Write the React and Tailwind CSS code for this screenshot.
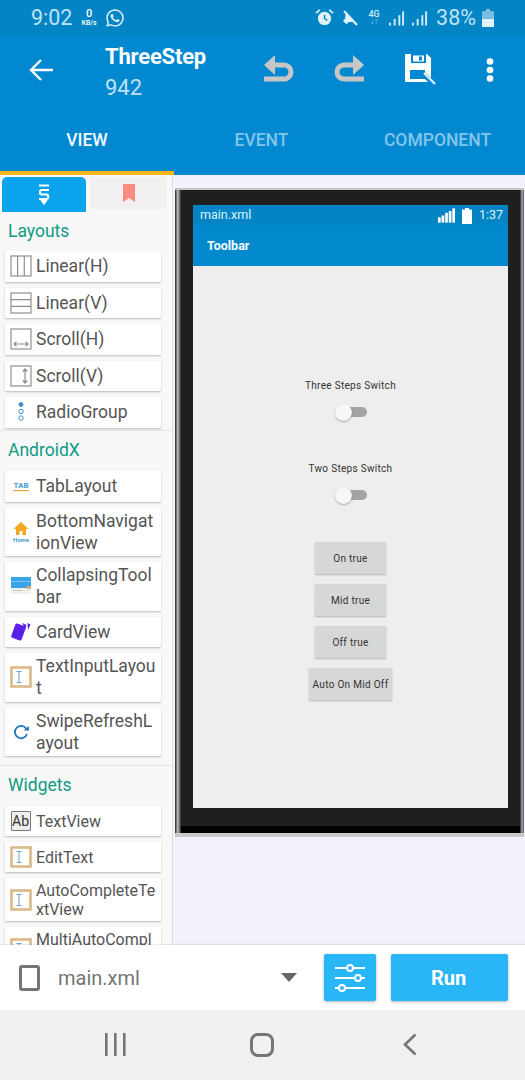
import React from "react";
import { IoLogoWhatsapp } from "react-icons/io5";

const font = { fontFamily: "Roboto, sans-serif" };

function GridIcon({ kind }) {
  // outline boxes used by the layout rows
  return (
    <svg width="22" height="22" viewBox="0 0 22 22" fill="none" stroke="#8f8f8f" strokeWidth="1.2">
      <rect x="1" y="1" width="20" height="20" />
      {kind === "h" && <path d="M7.6 1v20M14.3 1v20" />}
      {kind === "v" && <path d="M1 7.6h20M1 14.3h20" />}
      {kind === "sh" && <path d="M4 16h14M6.5 13.8 4 16l2.5 2.2M15.5 13.8 18 16l-2.500 2.200" />}
      {kind === "sv" && <path d="M15 4v14M12.800 6.500 15 4l2.200 2.500M12.800 15.500 15 18l2.200-2.500" />}
    </svg>
  );
}

function RadioIcon() {
  return (
    <svg width="22" height="24" viewBox="0 0 22 24" fill="none" stroke="#3d8fc9" strokeWidth="1">
      <circle cx="11" cy="4.500" r="2" fill="#3d8fc9" />
      <circle cx="11" cy="11.500" r="2.200" />
      <circle cx="11" cy="18" r="2.200" />
    </svg>
  );
}

function TabIcon() {
  return (
    <svg width="22" height="16" viewBox="0 0 22 16">
      <text x="11" y="9.500" textAnchor="middle" fontSize="8" fontWeight="700" fill="#4a9ad4" style={font}>TAB</text>
      <rect x="3" y="12" width="16" height="1.200" fill="#f0a640" />
    </svg>
  );
}

function HomeIcon() {
  return (
    <svg width="22" height="24" viewBox="0 0 22 24">
      <path d="M11 2 3.500 9H6v6h3.500v-4h3v4H16V9h2.500z" fill="#f5a623" />
      <text x="11" y="22" textAnchor="middle" fontSize="6" fontWeight="700" fill="#4a9ad4" style={font}>Home</text>
    </svg>
  );
}

function CollapseIcon() {
  return (
    <svg width="22" height="20" viewBox="0 0 22 20">
      <rect x="1" y="1" width="20" height="11" fill="#3ba4e6" />
      <rect x="1" y="5" width="20" height="1" fill="#7cc6f2" />
      <rect x="1" y="12" width="20" height="6" fill="#f0f0ea" />
      <rect x="3" y="14" width="9" height="1" fill="#c9c9c0" />
      <rect x="17" y="10" width="3.500" height="3" fill="#eeb04a" />
    </svg>
  );
}

function CardIcon() {
  return (
    <svg width="22" height="20" viewBox="0 0 22 20">
      <path d="M12.500 1 16.500 3 15 8z" fill="#5b21e6" />
      <path d="M17.500 1 20.500 2.500 18 8z" fill="#5b21e6" />
      <rect x="3" y="2.500" width="11" height="15" rx="1.500" transform="rotate(20 8.500 10)" fill="#5b21e6" />
    </svg>
  );
}

function InputIcon() {
  return (
    <svg width="22" height="22" viewBox="0 0 22 22" fill="none">
      <rect x="1.500" y="1.500" width="19" height="19" stroke="#dcb989" strokeWidth="2.600" />
      <path d="M6.500 5.500h5M6.500 16.500h5M9 5.500v11" stroke="#6fa3c4" strokeWidth="1" />
    </svg>
  );
}

function RefreshIcon() {
  return (
    <svg width="22" height="22" viewBox="0 0 22 22" fill="none">
      <path d="M16.500 8A6.200 6.200 0 1 0 17 13" stroke="#1d78bd" strokeWidth="1.800" />
      <path d="M13.500 9.500h5.500V5z" fill="#1d78bd" />
    </svg>
  );
}

function AbIcon() {
  return (
    <div className="flex h-[20px] w-[20px] items-center justify-center border border-[#777] bg-[#eee] rounded-[1px] text-[14px] leading-none text-[#333]">
      Ab
    </div>
  );
}

function Row({ icon, children }) {
  return (
    <div className="flex items-center bg-white rounded-[1px] shadow-[0_1px_2px_rgba(0,0,0,0.25)] ml-[5px] w-[156px] min-h-[30.5px] py-[2.250px]">
      <div className="flex w-[31px] shrink-0 justify-center">{icon}</div>
      <div className="whitespace-pre-line text-[17.5px] leading-[22px] text-[#555]">{children}</div>
    </div>
  );
}

function SmallRow({ icon, children }) {
  return (
    <div className="flex items-center bg-white rounded-[1px] shadow-[0_1px_2px_rgba(0,0,0,0.25)] ml-[5px] w-[156px] min-h-[30px] py-[2.500px]">
      <div className="flex w-[31px] shrink-0 justify-center">{icon}</div>
      <div className="whitespace-pre-line text-[16px] leading-[19px] text-[#555]">{children}</div>
    </div>
  );
}

function Heading({ children }) {
  return <div className="pl-[8px] text-[17.5px] leading-[21px] text-[#0f9a83]">{children}</div>;
}

function Sidebar() {
  return (
    <aside className="w-[173px] shrink-0 overflow-hidden border-r border-[#dedede] bg-[#f8f8f8]">
      <div className="flex pl-[2px] pt-[2px]">
        <div className="flex h-[35px] w-[84px] items-center justify-center rounded-t-[5px] bg-[#0ba3ec]">
          <svg width="14" height="22" viewBox="0 0 14 22" fill="none" stroke="#fff" strokeWidth="2">
            <path d="M2 1.500h10M12 6H4.500C2.500 6 2.500 10.500 4.500 10.500h5C11.800 10.500 11.800 15 9.500 15H2" />
            <path d="M4 16.500 7 20.500l3-4z" fill="#fff" strokeWidth="1" />
          </svg>
        </div>
        <div className="ml-[4px] flex h-[32px] w-[77px] items-center justify-center bg-[#f1f1f1]">
          <svg width="12" height="18" viewBox="0 0 12 18"><path d="M0 0h12v18l-6-4-6 4z" fill="#fb8a80" /></svg>
        </div>
      </div>
      <div className="mt-[8.500px]"><Heading>Layouts</Heading></div>
      <div className="mt-[9.500px] flex flex-col gap-[6px]">
        <Row icon={<GridIcon kind="h" />}>Linear(H)</Row>
        <Row icon={<GridIcon kind="v" />}>Linear(V)</Row>
        <Row icon={<GridIcon kind="sh" />}>Scroll(H)</Row>
        <Row icon={<GridIcon kind="sv" />}>Scroll(V)</Row>
        <Row icon={<RadioIcon />}>RadioGroup</Row>
      </div>
      <div className="mt-[2.500px] h-px bg-[#e4e4e4]" />
      <div className="mt-[8.500px]"><Heading>AndroidX</Heading></div>
      <div className="mt-[10.500px] flex flex-col gap-[6px]">
        <Row icon={<TabIcon />}>TabLayout</Row>
        <Row icon={<HomeIcon />}>{"BottomNavigat\nionView"}</Row>
        <Row icon={<CollapseIcon />}>{"CollapsingTool\nbar"}</Row>
        <Row icon={<CardIcon />}>CardView</Row>
        <Row icon={<InputIcon />}>{"TextInputLayou\nt"}</Row>
        <Row icon={<RefreshIcon />}>{"SwipeRefreshL\nayout"}</Row>
      </div>
      <div className="mt-[9px] h-px bg-[#e4e4e4]" />
      <div className="mt-[8.500px]"><Heading>Widgets</Heading></div>
      <div className="mt-[10.500px] flex flex-col gap-[6px]">
        <SmallRow icon={<AbIcon />}>TextView</SmallRow>
        <SmallRow icon={<InputIcon />}>EditText</SmallRow>
        <SmallRow icon={<InputIcon />}>{"AutoCompleteTe\nxtView"}</SmallRow>
        <SmallRow icon={<InputIcon />}>{"MultiAutoCompl\nete"}</SmallRow>
      </div>
    </aside>
  );
}

function Switch() {
  return (
    <div className="relative h-[18px] w-[32px]">
      <div className="absolute left-[6px] top-[4px] h-[10px] w-[26px] rounded-full bg-[#a3a3a3]" />
      <div className="absolute left-0 top-[0.5px] h-[17px] w-[17px] rounded-full bg-[#f7f7f7] shadow-[0_1px_2px_rgba(0,0,0,0.3)]" />
    </div>
  );
}

function MockButton({ wide, children }) {
  return (
    <div className={`flex h-[32px] items-center justify-center rounded-[1px] bg-[#d6d7d7] text-[10px] tracking-[0.3px] text-[#333] shadow-[0_1px_2px_rgba(0,0,0,0.25)] ${wide ? "w-[83px]" : "w-[71px]"}`}>
      {children}
    </div>
  );
}

function Phone() {
  return (
    <div className="flex w-[349px] flex-col border-t-2 border-b-[4px] border-t-[#c4c6c6] border-b-[#c9cbcb] bg-[#1e1f1e]">
      <div className="flex">
        <div className="w-[6px] shrink-0 bg-[linear-gradient(90deg,#222,#bdbdbd_45%,#666_80%,#1e1e1e)]" />
        <div className="flex-1">
          <div className="px-[12px] pt-[15px] pb-[18px]">
            <div className="flex h-[603px] w-[315px] flex-col bg-[#eeeeee]">
              <div className="flex h-[20px] items-center justify-between bg-[#0284c5] pl-[7px] pr-[5px] pt-[1px] text-[12.5px] text-[#dff1fb]">
                <span>main.xml</span>
                <div className="flex items-center gap-[7px]">
                  <svg width="17" height="15" viewBox="0 0 19 16" fill="#fff">
                    <rect x="0" y="10" width="3" height="6" /><rect x="4" y="8" width="3" height="8" /><rect x="8" y="5" width="3" height="11" /><rect x="12" y="3" width="3" height="13" /><rect x="16" y="0" width="3" height="16" />
                  </svg>
                  <svg width="10" height="16" viewBox="0 0 10 16" fill="#fff"><path d="M3 0h4v1.500h2a1 1 0 0 1 1 1V16H0V2.500a1 1 0 0 1 1-1h2z" /></svg>
                  <span>1:37</span>
                </div>
              </div>
              <div className="flex h-[41px] items-center bg-[#0288cc] pl-[14px] pt-[1px] text-[12.5px] font-bold text-[#f4fbff]">Toolbar</div>
              <div className="flex flex-1 flex-col items-center">
                <div className="mt-[113px] text-[10px] leading-[14px] tracking-[0.3px] text-[#333]">Three Steps Switch</div>
                <div className="mt-[10px]"><Switch /></div>
                <div className="mt-[41px] text-[10px] leading-[14px] tracking-[0.3px] text-[#333]">Two Steps Switch</div>
                <div className="mt-[10px]"><Switch /></div>
                <div className="mt-[38px] flex flex-col items-center gap-[10px]">
                  <MockButton>On true</MockButton>
                  <MockButton>Mid true</MockButton>
                  <MockButton>Off true</MockButton>
                  <MockButton wide>Auto On Mid Off</MockButton>
                </div>
              </div>
            </div>
          </div>
          <div className="h-[7px] bg-black" />
        </div>
        <div className="w-[4px] shrink-0 bg-[linear-gradient(90deg,#222,#aaa_50%,#555)]" />
      </div>
    </div>
  );
}

function StatusBar() {
  return (
    <div className="flex h-[35px] items-center justify-between bg-[#0284c5] pl-[31px] pr-[31px] text-[#bfe3f6]">
      <div className="flex items-center">
        <span className="text-[21.5px] leading-none">9:02</span>
        <div className="ml-[9px] flex flex-col items-center text-white">
          <span className="text-[11px] font-medium leading-[10px]">0</span>
          <span className="text-[7px] font-medium leading-[8px]">KB/s</span>
        </div>
        <IoLogoWhatsapp className="ml-[8px]" size={20} color="#e2f2fb" />
      </div>
      <div className="flex items-center">
        <svg width="19" height="19" viewBox="0 0 20 20" fill="#e2f2fb">
          <circle cx="10" cy="11" r="7" />
          <path d="M10 7v4l3 2" stroke="#0284c5" strokeWidth="1.400" fill="none" />
          <path d="M1 5.500 5 2M19 5.500 15 2" stroke="#e2f2fb" strokeWidth="1.800" />
        </svg>
        <svg className="ml-[7px]" width="18" height="18" viewBox="0 0 18 18" fill="#e2f2fb">
          <path d="M2 6h3l5-4v13l-5-4H2z" transform="rotate(-45 9 9)" />
          <path d="M3 2 16 16" stroke="#e2f2fb" strokeWidth="2" />
        </svg>
        <div className="ml-[8px] flex w-[14px] flex-col items-center text-[9px] font-medium leading-[8px] text-[#d6edf9]">
          <span>4G</span>
          <span className="text-[8px] text-[#8fcbeb]">↓↑</span>
        </div>
        <svg className="ml-[8px]" width="16" height="16" viewBox="0 0 17 16" fill="#d6edf9">
          <rect x="0" y="13" width="2" height="3" /><rect x="5" y="9" width="2" height="7" /><rect x="10" y="5" width="2" height="11" /><rect x="14" y="1" width="2" height="15" />
        </svg>
        <svg className="ml-[7px]" width="16" height="16" viewBox="0 0 17 16" fill="#d6edf9">
          <rect x="0" y="13" width="2" height="3" /><rect x="5" y="9" width="2" height="7" /><rect x="10" y="5" width="2" height="11" /><rect x="14" y="1" width="2" height="15" />
        </svg>
        <span className="ml-[8px] text-[21.5px] leading-none">38%</span>
        <svg className="ml-[6px]" width="12" height="18" viewBox="0 0 12 18">
          <path d="M4 0h4v2h3a1 1 0 0 1 1 1v15H0V3a1 1 0 0 1 1-1h3z" fill="#79bde3" />
          <path d="M0 10h12v8H0z" fill="#e2f2fb" />
        </svg>
      </div>
    </div>
  );
}

function Toolbar() {
  return (
    <div className="flex h-[70px] items-center bg-[#0288d1] pl-[29px]">
      <svg width="24" height="24" viewBox="0 0 24 24" fill="none" stroke="#fff" strokeWidth="2.400">
        <path d="M24 12H2M12 2 2 12l10 10" />
      </svg>
      <div className="ml-[52px] w-[159px] pt-[4px]">
        <div className="text-[22px] font-bold leading-[28px] tracking-[-0.2px] text-white">ThreeStep</div>
        <div className="mt-[3px] text-[22px] leading-[28px] text-[#bfe3f6]">942</div>
      </div>
      <svg width="30" height="30" viewBox="0 0 30 30" fill="none">
        <path d="M10 10h10a7 7 0 0 1 0 14H0" stroke="#c6c6c6" strokeWidth="5" />
        <path d="M0 10 11 0v20z" fill="#c6c6c6" />
      </svg>
      <svg className="ml-[40px]" width="30" height="30" viewBox="0 0 30 30" fill="none">
        <path d="M20 10H10a7 7 0 0 0 0 14h20" stroke="#c6c6c6" strokeWidth="5" />
        <path d="M30 10 19 0v20z" fill="#c6c6c6" />
      </svg>
      <svg className="ml-[41px]" width="32" height="32" viewBox="0 0 32 32">
        <path d="M0 1a1 1 0 0 1 1-1h21l4 4v24H1a1 1 0 0 1-1-1z" fill="#fff" />
        <rect x="6" y="0" width="15" height="9" fill="#0288d1" />
        <rect x="8" y="1.500" width="11" height="6" fill="#fff" />
        <rect x="14" y="2.500" width="3" height="4" fill="#0288d1" />
        <rect x="5" y="16" width="15" height="9" fill="#0288d1" />
        <path d="M17 19 30 31" stroke="#0288d1" strokeWidth="5" />
        <path d="M19 19 30 30" stroke="#d7edf8" strokeWidth="2.400" />
      </svg>
      <svg className="ml-[48px]" width="10" height="24" viewBox="0 0 10 24" fill="#fff">
        <circle cx="5" cy="3.500" r="3.300" /><circle cx="5" cy="12" r="3.300" /><circle cx="5" cy="20.500" r="3.300" />
      </svg>
    </div>
  );
}

export default function App() {
  return (
    <div className="flex h-[1080px] w-[525px] flex-col overflow-hidden bg-white" style={font}>
      <StatusBar />
      <Toolbar />
      <div className="grid h-[66px] grid-cols-3 bg-[#0288d1] pt-[5px] text-[17.5px] font-medium">
        <div className="flex items-center justify-center pr-[1px] text-[#f3fafe]">VIEW</div>
        <div className="flex items-center justify-center pr-[2px] text-[#83c5ea]">EVENT</div>
        <div className="flex items-center justify-center text-[#83c5ea]">COMPONENT</div>
      </div>
      <div className="h-[4px] bg-[#0288d1]"><div className="h-[4px] w-[174px] bg-[#f5b91d]" /></div>

      <div className="flex h-[770px] overflow-hidden bg-[#f2f2fd]">
        <Sidebar />
        <div className="ml-[2px] pt-[13px]"><Phone /></div>
      </div>

      <div className="z-10 flex h-[65px] items-center bg-white shadow-[0_-1px_1px_rgba(0,0,0,0.08)]">
        <div className="ml-[19px] h-[26px] w-[21px] rounded-[3px] border-[3px] border-[#757575]" />
        <span className="ml-[18px] w-[83px] text-[20px] text-[#757575]">main.xml</span>
        <svg className="ml-[140px]" width="16" height="9" viewBox="0 0 16 9"><path d="M0 0h16L8 9z" fill="#666" /></svg>
        <div className="ml-[27px] flex h-[47px] w-[52px] items-center justify-center rounded-[2px] bg-[#29b6f6] shadow-[0_1px_3px_rgba(0,0,0,0.3)]">
          <svg width="30" height="28" viewBox="0 0 30 28" fill="none" stroke="#fff" strokeWidth="2">
            <path d="M0 4h12M18 4h12M0 14h20M26 14h4M0 24h4M10 24h20" />
            <circle cx="15" cy="4" r="3" /><circle cx="23" cy="14" r="3" /><circle cx="7" cy="24" r="3" />
          </svg>
        </div>
        <div className="ml-[15px] flex h-[47px] w-[117px] items-center justify-center rounded-[2px] bg-[#29b6f6] pr-[2px] text-[20px] font-bold text-white shadow-[0_1px_3px_rgba(0,0,0,0.3)]">
          Run
        </div>
      </div>

      <div className="flex h-[70px] items-center bg-[#f1f1f1] pb-[1px]">
        <svg className="ml-[105px]" width="21" height="23" viewBox="0 0 21 23" fill="#767676">
          <rect x="0" y="0" width="2.600" height="23" /><rect x="9" y="0" width="2.600" height="23" /><rect x="18" y="0" width="2.600" height="23" />
        </svg>
        <div className="ml-[124px] h-[24px] w-[24px] rounded-[8px] border-[3px] border-[#767676]" />
        <svg className="ml-[129px]" width="14" height="23" viewBox="0 0 14 23" fill="none" stroke="#767676" strokeWidth="2.600">
          <path d="M12.500 1.500 2 11.500l10.500 10" />
        </svg>
      </div>
    </div>
  );
}
